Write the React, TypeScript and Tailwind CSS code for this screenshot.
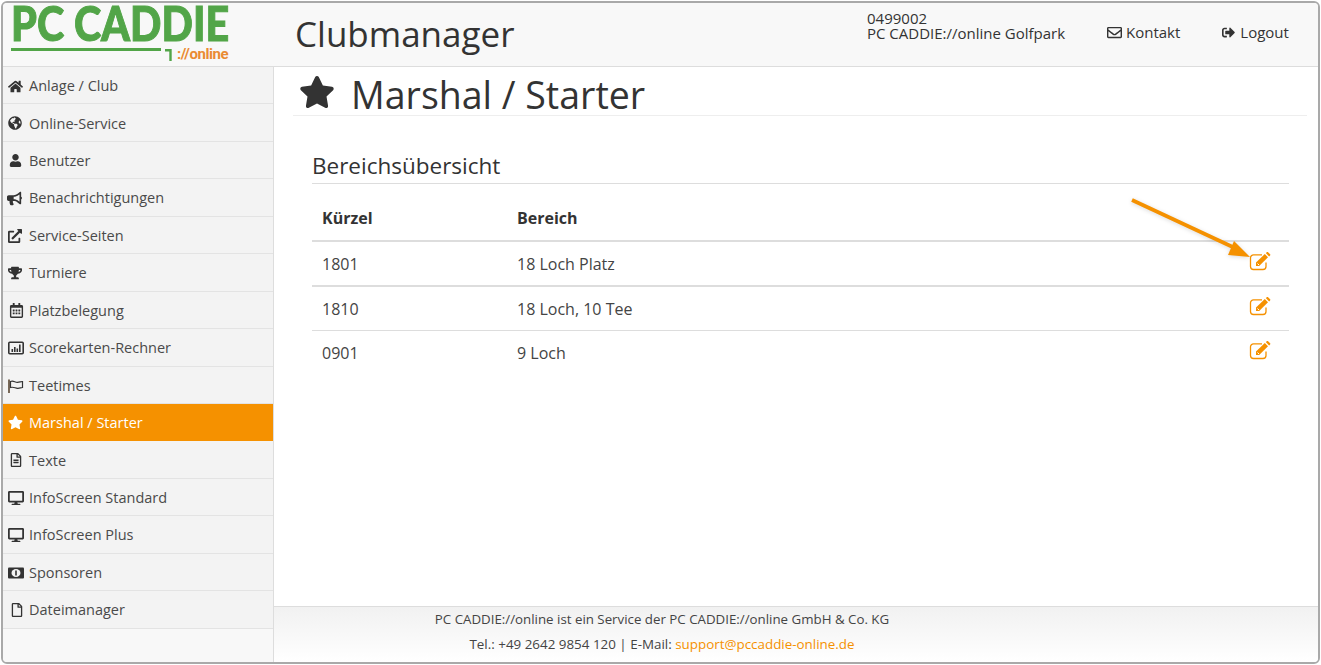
import React from "react";
import {
  FaHome, FaGlobeAmericas, FaUser, FaBullhorn, FaExternalLinkAlt, FaTrophy, FaRegCalendarAlt,
  FaStar, FaRegFileAlt, FaDesktop, FaRegFile, FaRegEnvelope, FaSignOutAlt,
} from "react-icons/fa";

function Stats() {
  return (
    <svg width="16" height="14" viewBox="0 0 16 14">
      <rect x="0.8" y="1.3" width="14.4" height="11.4" rx="1" fill="none" stroke="currentColor" strokeWidth="1.6" />
      <path d="M3.5 8h1.6v3H3.5zM6 6h1.6v5H6zM8.5 7.5h1.6V11H8.5zM11 3.5h1.6V11H11z" fill="currentColor" />
    </svg>
  );
}
function Flag() {
  return (
    <svg width="16" height="14" viewBox="0 0 16 14">
      <path d="M1 0.5v13.5" stroke="#6b5a48" strokeWidth="1.8" fill="none" />
      <path d="M2.5 2.5c3-1.2 4.5 1 7 .8 2-.1 3.500-.8 5-.8v6c-2 .2-3 1-5 .8-2.500-.2-4-1.800-7-.8z" fill="none" stroke="currentColor" strokeWidth="1.200" />
    </svg>
  );
}
function Money() {
  return (
    <svg width="16" height="12" viewBox="0 0 16 12">
      <rect x="0" y="0.5" width="16" height="11" rx="1" fill="currentColor" />
      <ellipse cx="8" cy="6" rx="4.500" ry="4" fill="#f3f3f3" />
      <rect x="7.200" y="3.500" width="1.600" height="5" fill="currentColor" />
    </svg>
  );
}
function Pencil() {
  return (
    <svg className="text-[#f59100]" width="22" height="19" viewBox="0 0 22 19">
      <path d="M13 2.800H4.500A3 3 0 0 0 1.500 5.800v8.700a3 3 0 0 0 3 3h9.500a3 3 0 0 0 3-3V10.500" fill="none" stroke="currentColor" strokeWidth="1.300" />
      <path d="M7 10.500L15.800 2l3.200 3.200-8.800 8.800H7z" fill="currentColor" />
      <path d="M16.800 1l1-.8a1 1 0 0 1 1.300 0l2 2a1 1 0 0 1 0 1.300l-1 1z" fill="currentColor" />
      <path d="M8.500 11.500l1.500 1.500" stroke="#fff" strokeWidth="1" />
    </svg>
  );
}

const items: [string, React.ReactNode][] = [
  ["Anlage / Club", <FaHome className="text-[15px]" />],
  ["Online-Service", <FaGlobeAmericas className="text-[14px]" />],
  ["Benutzer", <FaUser className="ml-[1px] text-[13px]" />],
  ["Benachrichtigungen", <FaBullhorn className="-ml-[1px] text-[15px]" />],
  ["Service-Seiten", <FaExternalLinkAlt className="text-[14px]" />],
  ["Turniere", <FaTrophy className="text-[14px]" />],
  ["Platzbelegung", <FaRegCalendarAlt className="ml-[1px] text-[15px]" />],
  ["Scorekarten-Rechner", <Stats />],
  ["Teetimes", <Flag />],
  ["Marshal / Starter", <FaStar className="text-[15px]" />],
  ["Texte", <FaRegFileAlt className="ml-[1px] text-[14px]" />],
  ["InfoScreen Standard", <FaDesktop className="text-[16px]" />],
  ["InfoScreen Plus", <FaDesktop className="text-[16px]" />],
  ["Sponsoren", <Money />],
  ["Dateimanager", <FaRegFile className="ml-[2px] text-[14px]" />],
];

const rows = [
  ["1801", "18 Loch Platz", "h-[45px] border-b-2", "-mt-[5px]"],
  ["1810", "18 Loch, 10 Tee", "h-[44px] border-b", "-mt-[5px]"],
  ["0901", "9 Loch", "h-[44px]", "-mt-[5px]"],
];

export default function App() {
  return (
    <div className="relative h-[665px] w-[1321px] overflow-hidden bg-white p-[1px] font-['Open_Sans',sans-serif] text-[#333]">
      <div className="flex h-[663px] w-[1319px] flex-col overflow-hidden rounded-[6px] border-2 border-[#a9a9a9] bg-white">
        <header className="flex h-[64px] shrink-0 border-b border-[#dddddd] bg-[#f8f8f8]">
          <div className="relative w-[292px] shrink-0 pl-[8px]">
            <div className="h-[39px] origin-left scale-x-[0.86] font-['Lato',sans-serif] text-[48px] leading-[39px] font-black whitespace-nowrap text-[#52a548] [-webkit-text-stroke:1px_#52a548]">
              PC CADDIE
            </div>
            <div className="mt-[4px] flex items-start">
              <div className="mt-[2px] h-[3px] w-[150px] bg-[#52a548]" />
              <svg className="mt-[3px] ml-[4px]" width="7" height="12" viewBox="0 0 7 12">
                <path d="M0 1.200h5.500v10.800" fill="none" stroke="#52a548" strokeWidth="2.400" />
              </svg>
              <span className="ml-[5px] font-['Roboto',sans-serif] text-[15px] leading-[16px] font-bold tracking-[-0.4px] text-[#ea8b33]">
                ://online
              </span>
            </div>
          </div>
          <div className="w-[572px] shrink-0 pt-[8px] text-[35px] leading-[46px]">Clubmanager</div>
          <div className="w-[240px] shrink-0 pt-[8px] text-[15px] leading-[15px] whitespace-nowrap">
            <div>0499002</div>
            <div>PC CADDIE://online Golfpark</div>
          </div>
          <div className="flex h-[50px] items-center pt-[9px] text-[15px] whitespace-nowrap">
            <FaRegEnvelope className="mr-[4px] text-[15px]" />
            <span>Kontakt</span>
            <FaSignOutAlt className="mr-[5px] ml-[42px] text-[13px]" />
            <span>Logout</span>
          </div>
        </header>
        <div className="flex min-h-0 flex-1">
          <nav className="w-[271px] shrink-0 border-r border-[#dddddd] bg-[#f8f8f8]">
            {items.map(([label, icon]) => {
              const active = label === "Marshal / Starter";
              return (
                <div
                  key={label as string}
                  className={
                    active
                      ? "flex h-[37.45px] items-center bg-[#f59100] pl-[5px] text-[14.5px] text-white"
                      : "flex h-[37.45px] items-center border-b border-[#e3e3e3] bg-[#f3f3f3] pt-[1.6px] pl-[5px] text-[14.5px] text-[#4a4a4a]"
                  }
                >
                  <span className={active ? "flex w-[21px] text-white" : "flex w-[21px] text-[#333]"}>{icon}</span>
                  {label}
                </div>
              );
            })}
          </nav>
          <main className="flex min-w-0 flex-1 flex-col">
            <div className="flex-1 pt-[1px]">
              <div className="mr-[11px] ml-[19px] flex h-[48px] items-center border-b border-[#eeeeee] pl-[6px]">
                <FaStar className="mr-[16px] text-[36px] text-[#333]" />
                <h1 className="pt-[6px] text-[37.5px] leading-[42px]">Marshal / Starter</h1>
              </div>
              <div className="mt-[34px] mr-[29px] ml-[38px]">
                <h2 className="h-[34px] border-b border-[#dddddd] text-[22.5px] leading-[32px]">Bereichsübersicht</h2>
                <div className="flex h-[58px] items-center border-b-2 border-[#dddddd] pt-[11px] text-[16px] font-bold">
                  <div className="w-[205px] pl-[10px]">Kürzel</div>
                  <div>Bereich</div>
                </div>
                {rows.map(([a, b, c, d]) => (
                  <div key={a} className={`flex items-center border-[#dddddd] text-[16px] text-[#444] ${c}`}>
                    <div className="w-[205px] pl-[10px]">{a}</div>
                    <div className="flex-1">{b}</div>
                    <div className={`mr-[18px] ${d}`}>
                      <Pencil />
                    </div>
                  </div>
                ))}
              </div>
            </div>
            <footer className="h-[56px] shrink-0 border-t border-[#dddddd] bg-gradient-to-b from-[#f1f1f1] to-white pr-[268px] text-center text-[13.3px] leading-[25px] text-[#444]">
              <div>PC CADDIE://online ist ein Service der PC CADDIE://online GmbH &amp; Co. KG</div>
              <div className="text-[13.4px]">
                Tel.: +49 2642 9854 120 | E-Mail: <span className="text-[#f59100]">support@pccaddie-online.de</span>
              </div>
            </footer>
          </main>
        </div>
      </div>
      <svg className="absolute top-[195px] left-[1125px] drop-shadow-sm" width="135" height="75" viewBox="0 0 135 75">
        <path d="M7 5 L112 54" stroke="#f59100" strokeWidth="3.800" />
        <path d="M125 62 L103 60 L109 46 Z" fill="#f59100" />
      </svg>
    </div>
  );
}
